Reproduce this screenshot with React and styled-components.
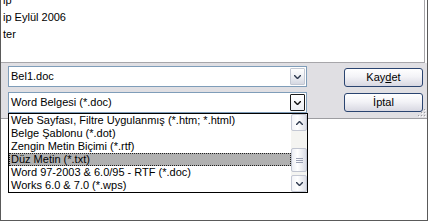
import React from "react";
import styled, { createGlobalStyle } from "styled-components";

const Global = createGlobalStyle`
  html, body { margin: 0; padding: 0; width: 428px; height: 221px; overflow: hidden; background: #fff; }
  body { font-family: "Liberation Sans", Arial, sans-serif; font-size: 11px; color: #000; }
  #root { width: 428px; height: 221px; }
`;

const Frame = styled.div`
  box-sizing: border-box;
  width: 428px;
  height: 221px;
  border-left: 1px solid #5a5a5a;
  border-right: 1px solid #5a5a5a;
  border-bottom: 1px solid #5a5a5a;
  background: #fff;
  display: flex;
  flex-direction: column;
`;

const TopPanel = styled.div`
  box-sizing: border-box;
  height: 63px;
  flex: none;
  margin-right: 2px;
  background: #fff;
  border-right: 1px solid #a7a6aa;
  border-bottom: 1px solid #a7a6aa;
  overflow: hidden;
  padding-left: 2px;
  position: relative;
`;

const PanelBackdrop = styled.div`
  position: absolute;
  top: 0;
  right: -3px;
  bottom: -1px;
  left: 0;
  z-index: -1;
`;

const InfoLine = styled.div`
  height: 17px;
  line-height: 17px;
  font-size: 11px;
  white-space: nowrap;
  &:first-child { margin-top: -8px; }
`;

const DialogBar = styled.div`
  box-sizing: border-box;
  height: 56px;
  flex: none;
  background: #e0dfe3;
  border-bottom: 1px solid #9d9da1;
  display: flex;
  padding: 3px 4px 0 7px;
  position: relative;
`;

const ComboColumn = styled.div`
  display: flex;
  flex-direction: column;
  gap: 5px;
  width: 299px;
`;

const ComboWrap = styled.div`
  position: relative;
`;

const Combo = styled.div`
  box-sizing: border-box;
  width: 299px;
  height: 21px;
  border: 1px solid #7f9db9;
  background: #fff;
  display: flex;
  align-items: center;
  padding: 1px;
`;

const ComboText = styled.div`
  flex: 1;
  padding-left: 1px;
  line-height: 17px;
  white-space: nowrap;
`;

const ArrowButton = styled.div`
  box-sizing: border-box;
  width: 15px;
  height: 17px;
  display: flex;
  align-items: center;
  justify-content: center;
  border: 1px solid ${(p) => (p.$open ? "#1a1a1a" : "#c3c8d3")};
  border-radius: 1px;
  background: ${(p) =>
    p.$open
      ? "linear-gradient(#ffffff, #eceef3)"
      : "linear-gradient(#ffffff 0%, #eef0f4 50%, #d5d8e2 100%)"};
`;

const DropList = styled.div`
  box-sizing: border-box;
  position: absolute;
  top: 100%;
  left: 0;
  width: 300px;
  height: 80px;
  border: 1px solid #000;
  background: #fff;
  display: flex;
  z-index: 10;
`;

const Items = styled.div`
  flex: 1;
  display: flex;
  flex-direction: column;
`;

const Item = styled.div`
  box-sizing: border-box;
  height: 13px;
  line-height: 11px;
  padding-left: 1px;
  white-space: nowrap;
  overflow: hidden;
  border: 1px ${(p) => (p.$selected ? "dotted #202020" : "solid transparent")};
  background: ${(p) => (p.$selected ? "#b0b0b0" : "transparent")};
`;

const ScrollBar = styled.div`
  width: 16px;
  display: flex;
  flex-direction: column;
  background: #f4f4f1;
`;

const ScrollButton = styled.div`
  box-sizing: border-box;
  width: 16px;
  height: 17px;
  display: flex;
  align-items: center;
  justify-content: center;
  border: 1px solid #c4c8d4;
  border-radius: 2px;
  background: linear-gradient(90deg, #f3f4f8 0%, #ffffff 40%, #dcdee7 100%);
  flex: none;
`;

const Track = styled.div`
  flex: 1;
  display: flex;
  flex-direction: column;
`;

const Thumb = styled.div`
  box-sizing: border-box;
  width: 16px;
  height: 24px;
  margin-top: ${(p) => p.$offset}px;
  border: 1px solid #c0c4d0;
  border-radius: 2px;
  background: linear-gradient(90deg, #eceef4 0%, #ffffff 40%, #d9dce6 100%);
  display: flex;
  align-items: center;
  justify-content: center;
`;

const ButtonColumn = styled.div`
  margin-left: auto;
  padding-top: 2px;
  display: flex;
  flex-direction: column;
  gap: 6px;
`;

const Button = styled.div`
  box-sizing: border-box;
  width: 79px;
  height: 19px;
  border: 1px solid #2a4470;
  border-radius: 3px;
  background: linear-gradient(#ffffff 0%, #f3f3f7 45%, #d8d8e2 100%);
  display: flex;
  align-items: center;
  justify-content: center;
  line-height: 17px;
  font-size: 11px;
  u { text-decoration: underline; text-underline-offset: 1px; }
`;

const Grip = styled.svg`
  position: absolute;
  right: 1px;
  bottom: 1px;
`;

const LowerArea = styled.div`
  flex: 1;
  background: #fff;
`;

const Chevron = ({ up, color = "#2f3a4f" }) => (
  <svg width="7" height="4" viewBox="0 0 7 4">
    {up ? (
      <path d="M0 4 L0 3 L3 0 L4 0 L7 3 L7 4 L6 4 L3.5 1.5 L1 4 Z" fill={color} />
    ) : (
      <path d="M0 0 L1 0 L3.5 2.5 L6 0 L7 0 L7 1 L4 4 L3 4 L0 1 Z" fill={color} />
    )}
  </svg>
);

const GripLines = () => (
  <svg width="7" height="5" viewBox="0 0 7 5">
    <rect x="0" y="0" width="7" height="1" fill="#9aa0b4" />
    <rect x="0" y="2" width="7" height="1" fill="#9aa0b4" />
    <rect x="0" y="4" width="7" height="1" fill="#9aa0b4" />
  </svg>
);

const types = [
  "Web Sayfası, Filtre Uygulanmış (*.htm; *.html)",
  "Belge Şablonu (*.dot)",
  "Zengin Metin Biçimi (*.rtf)",
  "Düz Metin (*.txt)",
  "Word 97-2003 & 6.0/95 - RTF (*.doc)",
  "Works 6.0 & 7.0 (*.wps)",
];

export default function App() {
  return (
    <>
      <Global />
      <Frame>
        <TopPanel>
          <InfoLine>ip</InfoLine>
          <InfoLine>ip Eylül 2006</InfoLine>
          <InfoLine>ter</InfoLine>
        </TopPanel>
        <DialogBar>
          <ComboColumn>
            <Combo>
              <ComboText>Bel1.doc</ComboText>
              <ArrowButton>
                <Chevron />
              </ArrowButton>
            </Combo>
            <ComboWrap>
              <Combo>
                <ComboText>Word Belgesi (*.doc)</ComboText>
                <ArrowButton $open>
                  <Chevron color="#111" />
                </ArrowButton>
              </Combo>
              <DropList>
                <Items>
                  {types.map((t, i) => (
                    <Item key={t} $selected={i === 3}>
                      {t}
                    </Item>
                  ))}
                </Items>
                <ScrollBar>
                  <ScrollButton>
                    <Chevron up />
                  </ScrollButton>
                  <Track>
                    <Thumb $offset={17}>
                      <GripLines />
                    </Thumb>
                  </Track>
                  <ScrollButton>
                    <Chevron />
                  </ScrollButton>
                </ScrollBar>
              </DropList>
            </ComboWrap>
          </ComboColumn>
          <ButtonColumn>
            <Button>
              <span>
                Kay<u>d</u>et
              </span>
            </Button>
            <Button>İptal</Button>
          </ButtonColumn>
          <Grip width="8" height="8" viewBox="0 0 8 8">
            <rect x="6" y="0" width="1" height="1" fill="#9d9da1" />
            <rect x="3" y="3" width="1" height="1" fill="#9d9da1" />
            <rect x="6" y="3" width="1" height="1" fill="#9d9da1" />
            <rect x="0" y="6" width="1" height="1" fill="#9d9da1" />
            <rect x="3" y="6" width="1" height="1" fill="#9d9da1" />
            <rect x="6" y="6" width="1" height="1" fill="#9d9da1" />
            <rect x="7" y="1" width="1" height="1" fill="#fff" />
            <rect x="4" y="4" width="1" height="1" fill="#fff" />
            <rect x="7" y="4" width="1" height="1" fill="#fff" />
            <rect x="1" y="7" width="1" height="1" fill="#fff" />
            <rect x="4" y="7" width="1" height="1" fill="#fff" />
            <rect x="7" y="7" width="1" height="1" fill="#fff" />
          </Grip>
        </DialogBar>
        <LowerArea />
      </Frame>
    </>
  );
}
